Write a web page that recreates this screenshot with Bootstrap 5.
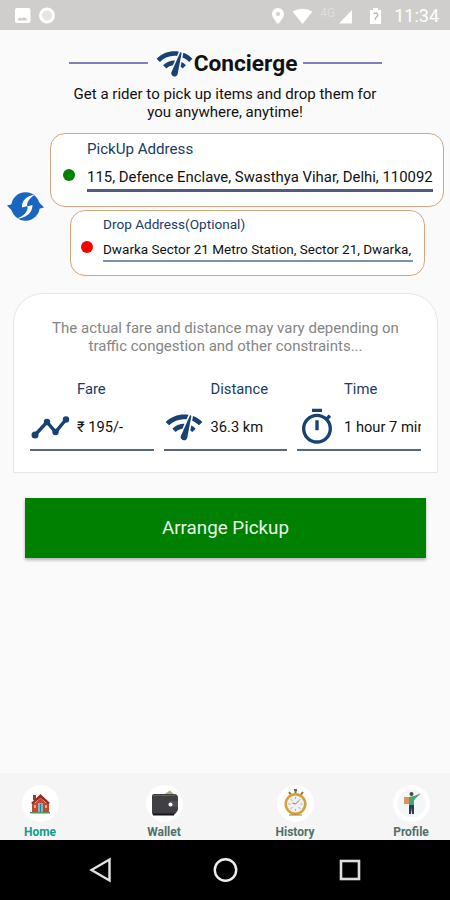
<!DOCTYPE html>
<html lang="en">
<head>
<meta charset="utf-8">
<meta name="viewport" content="width=device-width, initial-scale=1">
<title>Concierge</title>
<link href="https://cdn.jsdelivr.net/npm/bootstrap@5.3.0/dist/css/bootstrap.min.css" rel="stylesheet">
<style>
body{font-family:Roboto,"Noto Sans",sans-serif;background:#fafafa;color:#111;letter-spacing:0}
.screen{width:450px;height:900px}
.status{height:30px;background:#cfcecc;color:#fff;padding:1px 11px 0 14px}
.clock{font-size:18px;line-height:30px;margin-left:11px}
.net{font-size:12px;color:#dededc;line-height:1;margin:-5px 0 0 7px;width:16px}
.brand{height:40px;margin-top:13px;padding:0 68px 0 69px}
.rule{height:2px;background:#7c80bb;margin-top:-1px}
.brand h1{font-size:22.7px;line-height:40px;font-weight:700;margin-right:6px;margin-top:2px}
.gap-icon{margin-left:7px}
.tagline{font-size:15.050px;line-height:18px;margin-top:2px}
.addresses{height:144px;margin-top:12px}
.swap{width:50px;padding:57px 0 0 7px}
.field-box{background:#fff;border:1.5px solid #d3a780;border-radius:15px}
.pick{height:74px;width:394px;padding:6px 10px 0 12px}
.drop{height:66px;width:355px;margin:3px 0 0 20px;padding:4px 11px 0 10px}
.dot{width:12px;height:12px}
.pick .dot{background:#008200;margin:29px 12px 0 0}
.drop .dot{background:#f90000;margin:26px 10px 0 0}
.navy{color:#173c68}
.pick .cap{font-size:15.1px;line-height:18px}
.pick .val{font-size:14.920px;line-height:20px;margin-top:8px;border-bottom:3px solid #515b82;height:26px;padding-top:1px}
.drop .cap{font-size:13.6px;line-height:18px}
.drop .val{font-size:13.520px;line-height:20px;margin-top:6px;border-bottom:2px solid #7d93ad;height:23px}
.fare-card{width:425px;height:180px;margin:16px 0 0 13px;background:#fff;border:1px solid #e6e6e6;border-radius:30px 30px 0 0;padding:25px 16px 0 16px}
.note{font-size:15px;line-height:18px;color:#858585}
.stats{margin-top:25px;gap:10px}
.stat{width:123.5px}
.stat .cap{font-size:14.8px;line-height:18px;padding-left:47px}
.stat .line{height:53px;border-bottom:2px solid #57697f;font-size:14.7px;gap:7px;color:#111;padding-top:7px}
.arrange{width:401px;height:60px;margin:25px 0 0 25px;background:#008000;color:#e9f5e9;font-size:18.8px;border:0;border-radius:0;box-shadow:0 2px 3px rgba(0,0,0,.3)}
.arrange:hover{background:#008000;color:#fff}
.tabs{height:67px;background:#f5f5f5;font-size:12px;font-weight:700;color:#51706a;padding:12px 19px 0 20px}
.tab{width:40px;line-height:14px}
.tab.wallet{margin-left:84px}
.tab.history{margin-left:91px}
.tab.profile{margin-left:76px}
.tab.on{color:#0f9d8a}
.disc{width:37px;height:37px;background:#fff}
.disc + span{margin-top:3px}
.sysbar{height:60px;background:#000;padding:0 87px 0 88px}
</style>
</head>
<body>
<div class="screen d-flex flex-column overflow-hidden">
  <header class="status d-flex align-items-center">
    <svg width="42" height="20" viewBox="0 0 42 20"><rect x="1" y="2" width="15.500" height="15" rx="2" fill="#fff"/><path d="M4 14.500v-2l2-1 2 1 2-1.500 3 2v1.500z" fill="#cfcecc"/><circle cx="33" cy="9.500" r="6.500" fill="#e6e5e3" stroke="#fff" stroke-width="3"/></svg>
    <svg class="ms-auto" width="42" height="20" viewBox="0 0 42 20"><path d="M7 2a6 6 0 0 0-6 6c0 4 6 10 6 10s6-6 6-10a6 6 0 0 0-6-6z" fill="#fff"/><circle cx="7" cy="8" r="2" fill="#cfcecc"/><path d="M21.500 5.500Q31 0 41.500 5.500L31.500 18z" fill="#fff"/></svg>
    <span class="net">4G</span>
    <svg width="47" height="20" viewBox="0 0 47 20"><path d="M3 17.500L16 4v13.500z" fill="#fff"/><path d="M34 4h3V2h5v2h3v14H34z" fill="#fff"/><path d="M37.500 8q3-2 4 0t-2 4v2" stroke="#bbb" stroke-width="1.500" fill="none"/></svg>
    <span class="clock">11:34</span>
  </header>

  <div class="brand d-flex align-items-center">
    <div class="rule flex-grow-1"></div>
    <svg class="gap-icon" width="39" height="39" viewBox="0 0 24 24" fill="#174273"><path id="gauge" d="M15.900 5c-.17 0-.32.090-.41.230l-.070.150-5.180 11.650c-.16.290-.26.610-.26.960 0 1.110.9 2.010 2.010 2.010.96 0 1.770-.68 1.960-1.590l.010-.030L16.400 5.500c0-.28-.22-.5-.5-.5zM1 9l2 2c2.880-2.880 6.790-4.080 10.530-3.620l1.190-2.680C9.890 3.840 4.740 5.270 1 9zm20 2l2-2c-1.640-1.640-3.550-2.820-5.590-3.570l-.53 2.820c1.500.620 2.900 1.530 4.120 2.750zm-4 4l2-2c-.8-.8-1.700-1.420-2.660-1.890l-.55 2.920c.42.270.83.590 1.210.970zM5 13l2 2c1.130-1.130 2.560-1.790 4.030-2l1.280-2.880c-2.630-.08-5.300.870-7.310 2.880z"/></svg>
    <h1 class="mb-0">Concierge</h1>
    <div class="rule flex-grow-1"></div>
  </div>
  <p class="tagline text-center mb-0">Get a rider to pick up items and drop them for<br>you anywhere, anytime!</p>

  <section class="addresses d-flex">
    <div class="swap flex-shrink-0">
      <svg width="37" height="32" viewBox="0 0 37 32" fill="#1866bd"><circle cx="18.500" cy="16.500" r="14.300"/><path d="M0 15.500L6 14l5 13z"/><path d="M37 17.500L31 19 26 6z"/><path d="M28 4.500C19 6 14.500 11 15 17.500l5.500-1.500C21 22 17 26 9 29c10-1 16.500-6 16.500-14L20 16.500C20 11 23 8 28 4.500z" fill="#fff"/></svg>
    </div>
    <div>
      <div class="field-box pick d-flex">
        <span class="dot rounded-circle flex-shrink-0"></span>
        <div class="flex-grow-1 overflow-hidden"><div class="cap navy">PickUp Address</div><div class="val text-nowrap overflow-hidden">115, Defence Enclave, Swasthya Vihar, Delhi, 110092</div></div>
      </div>
      <div class="field-box drop d-flex">
        <span class="dot rounded-circle flex-shrink-0"></span>
        <div class="flex-grow-1 overflow-hidden"><div class="cap navy">Drop Address(Optional)</div><div class="val text-nowrap overflow-hidden">Dwarka Sector 21 Metro Station, Sector 21, Dwarka,</div></div>
      </div>
    </div>
  </section>

  <section class="fare-card">
    <p class="note text-center mb-0">The actual fare and distance may vary depending on<br>traffic congestion and other constraints...</p>
    <div class="stats d-flex">
      <div class="stat"><div class="cap navy">Fare</div><div class="line d-flex align-items-center"><svg class="flex-shrink-0" width="40" height="40" viewBox="0 0 40 40" fill="#174273"><path d="M5 28L17 15L25.500 25L36 12.500" fill="none" stroke="#174273" stroke-width="3.400"/><circle cx="5" cy="28" r="3.500"/><circle cx="17" cy="15" r="3.200"/><circle cx="25.500" cy="25" r="3.200"/><circle cx="36" cy="12.500" r="3.200"/></svg><span>₹ 195/-</span></div></div>
      <div class="stat"><div class="cap navy">Distance</div><div class="line d-flex align-items-center"><svg class="flex-shrink-0" width="40" height="40" viewBox="0 0 24 24" fill="#174273"><use href="#gauge"/></svg><span>36.3 km</span></div></div>
      <div class="stat"><div class="cap navy">Time</div><div class="line d-flex align-items-center overflow-hidden text-nowrap"><svg class="flex-shrink-0" width="40" height="40" viewBox="0 0 24 24" fill="#174273"><path d="M15 1H9v2h6V1zm-4 13h2V8h-2v6zm8.030-6.610l1.420-1.420c-.43-.51-.9-.99-1.410-1.410l-1.420 1.420C16.070 4.740 14.120 4 12 4c-4.970 0-9 4.030-9 9s4.020 9 9 9 9-4.030 9-9c0-2.120-.74-4.070-1.970-5.610zM12 20c-3.870 0-7-3.130-7-7s3.130-7 7-7 7 3.130 7 7-3.130 7-7 7z"/></svg><span>1 hour 7 mins</span></div></div>
    </div>
  </section>

  <button class="btn arrange flex-shrink-0" type="button">Arrange Pickup</button>

  <nav class="tabs mt-auto d-flex flex-shrink-0">
    <div class="tab on d-flex flex-column align-items-center"><div class="disc rounded-circle"><svg width="37" height="37" viewBox="0 0 37 37"><path d="M11 10h3v5h-3z" fill="#a33a28"/><path d="M10 18h17v9H10z" fill="#c64732"/><path d="M9 18l9.500-9 9.500 9-2 1-7.500-6-7.500 6z" fill="#8f3026"/><path d="M13 18l5.500-5 5.500 5z" fill="#c64732"/><path d="M16 18h5v9h-5z" fill="#79b9c7"/><path d="M18 19h1v8h-1z" fill="#397c87"/><path d="M12 20h2v3h-2zm11 0h2v3h-2z" fill="#e6b163"/><path d="M8 27h20v1.500H8z" fill="#4c9650"/></svg></div><span>Home</span></div>
    <div class="tab wallet d-flex flex-column align-items-center"><div class="disc rounded-circle"><svg width="37" height="37" viewBox="0 0 37 37"><path d="M17 10l7-4.500 4 4v3H17z" fill="#a5b36a"/><path d="M6 11q0-2 2-2h20q4 0 4 4v11q0 2-4 6H8q-2 0-2-2z" fill="#404044"/><path d="M7 10.500h22" stroke="#626266"/><path d="M7 29.500h21" stroke="#161618" stroke-width="2"/><path d="M32 16h-8q-3 3 0 6h8z" fill="#505054"/><circle cx="24.500" cy="19.500" r="2" fill="#fff"/></svg></div><span>Wallet</span></div>
    <div class="tab history d-flex flex-column align-items-center"><div class="disc rounded-circle"><svg width="37" height="37" viewBox="0 0 37 37"><path d="M18.500 5v5M12 7l3 4M26 7l-3 4" stroke="#927638" stroke-width="2"/><path d="M17 5h3" stroke="#666" stroke-width="2"/><circle cx="18.500" cy="19" r="9.800" fill="#edf0f3" stroke="#d5a132" stroke-width="2.500"/><path d="M18.500 12v2m0 10v2m-7-7h2m10 0h2m-12-5l2 2m6 6l2 2m0-10l-2 2m-6 6l-2 2" stroke="#a7adb7"/><path d="M18.500 19l3-3m-3 3l-3-1" stroke="#c25d4b"/><path d="M12 30h13" stroke="#9e7934"/></svg></div><span>History</span></div>
    <div class="tab profile d-flex flex-column align-items-center"><div class="disc rounded-circle"><svg width="37" height="37" viewBox="0 0 37 37"><circle cx="18.500" cy="18.500" r="14" fill="#f4f7f8"/><circle cx="18.500" cy="9" r="2" fill="#5b4037"/><path d="M11 12h6v7h-6z" fill="#e39157"/><path d="M16 12l5-1 5-2v1l-5 5v5h-5z" fill="#41a579"/><path d="M25 10l2-1" stroke="#c9a187" stroke-width="1.500"/><path d="M16 20h5v9h-2l-.5-6-.5 6h-2z" fill="#303c50"/></svg></div><span>Profile</span></div>
  </nav>
  <footer class="sysbar d-flex align-items-center justify-content-between flex-shrink-0">
    <svg width="26" height="26" viewBox="0 0 26 26"><path d="M3.500 13L21.500 2.500v21z" fill="none" stroke="#e4e4e4" stroke-width="2.400"/></svg>
    <svg width="26" height="26" viewBox="0 0 26 26"><circle cx="12.500" cy="13" r="10.700" fill="none" stroke="#eee" stroke-width="2.400"/></svg>
    <svg width="26" height="26" viewBox="0 0 26 26"><rect x="4" y="4" width="18" height="18" fill="none" stroke="#ddd" stroke-width="2.600"/></svg>
  </footer>
</div>
<script src="https://cdn.jsdelivr.net/npm/bootstrap@5.3.0/dist/js/bootstrap.bundle.min.js"></script>
</body>
</html>
